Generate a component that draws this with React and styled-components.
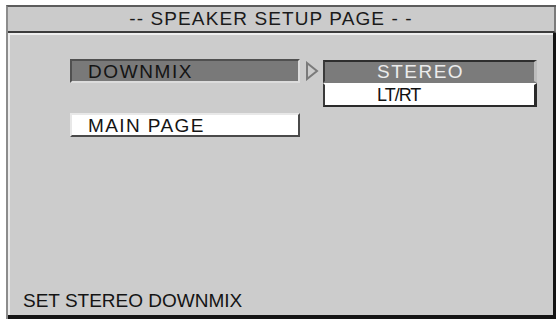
import styled, { createGlobalStyle } from "styled-components";

const GlobalStyle = createGlobalStyle`
  html, body {
    margin: 0;
    padding: 0;
    background: #ffffff;
  }
  body {
    font-family: "Liberation Sans", Arial, sans-serif;
  }
`;

/* Outer OSD frame */
const Frame = styled.div`
  display: flex;
  flex-direction: column;

  width: 548px;
  height: 312px;
  margin: 5px 0 0 6px;

  border-left: 2px solid #8c8c8c;
  border-top: 2px solid #5c5c5c;
`;

/* Title bar */
const TitleBar = styled.div`
  display: flex;
  align-items: center;
  justify-content: center;

  height: 24px;
  padding-right: 20px;
  background: #cbcbcb;
  border-right: 2px solid #7a7a7a;
  border-bottom: 2px solid #3c3c3c;

  font-size: 19px;
  letter-spacing: 1.1px;
  color: #1a1a1a;
`;

/* Page body */
const Body = styled.div`
  flex: 1;
  display: flex;
  flex-direction: column;

  background: #cccccc;
  box-shadow: inset 2px 2px 0 #eeeeee;
  border-right: 3px solid #141414;
  border-bottom: 4px solid #141414;

  padding: 26px 0 3px 62px;
`;

const MenuArea = styled.div`
  display: flex;
  align-items: flex-start;
`;

const MainColumn = styled.div`
  display: flex;
  flex-direction: column;
  gap: 30px;
  width: 230px;
`;

const MenuItem = styled.div`
  display: flex;
  align-items: center;
  box-sizing: border-box;

  height: 24px;
  padding: 2px 0 0 16px;

  font-size: 19px;
  letter-spacing: ${(p) => p.$spacing || 1.5}px;
  color: #141414;

  background: ${(p) => (p.$active ? "#797979" : "#ffffff")};
  border-top: 2px solid ${(p) => (p.$active ? "#505050" : "#e8e8e8")};
  border-left: 2px solid ${(p) => (p.$active ? "#505050" : "#e8e8e8")};
  border-bottom: 2px solid ${(p) => (p.$active ? "#dcdcdc" : "#4a4a4a")};
  border-right: 2px solid ${(p) => (p.$active ? "#dcdcdc" : "#4a4a4a")};
`;

const ArrowCell = styled.div`
  display: flex;
  align-items: center;
  justify-content: center;
  width: 23px;
  height: 24px;
`;

const SubMenu = styled.div`
  display: flex;
  flex-direction: column;
  width: 214px;
  margin-top: 1px;
`;

const SubItem = styled.div`
  display: flex;
  align-items: center;
  box-sizing: border-box;

  height: ${(p) => (p.$active ? 23 : 24)}px;
  padding-left: 52px;

  font-size: ${(p) => (p.$active ? 19 : 18)}px;
  letter-spacing: ${(p) => (p.$active ? 1.5 : -1)}px;
  color: ${(p) => (p.$active ? "#ececec" : "#111111")};

  background: ${(p) => (p.$active ? "#7b7b7b" : "#ffffff")};
  border-top: 2px solid ${(p) => (p.$active ? "#2e2e2e" : "#ffffff")};
  border-left: 2px solid #3a3a3a;
  border-right: 3px solid ${(p) => (p.$active ? "#bcbcbc" : "#2a2a2a")};
  border-bottom: 2px solid ${(p) => (p.$active ? "#7b7b7b" : "#2a2a2a")};
`;

const Status = styled.div`
  margin-top: auto;
  margin-left: -47px;

  font-size: 19px;
  letter-spacing: 0;
  color: #141414;
`;

function Arrow() {
  return (
    <svg width="16" height="20" viewBox="0 0 16 20">
      <path d="M3 2 L13 10 L3 18 Z" fill="none" stroke="#7a7a7a" strokeWidth="2" />
    </svg>
  );
}

export default function App() {
  return (
    <>
      <GlobalStyle />
      <Frame>
        <TitleBar>-- SPEAKER SETUP PAGE - -</TitleBar>
        <Body>
          <MenuArea>
            <MainColumn>
              <MenuItem $active $spacing={1.6}>DOWNMIX</MenuItem>
              <MenuItem $spacing={1.4}>MAIN PAGE</MenuItem>
            </MainColumn>
            <ArrowCell>
              <Arrow />
            </ArrowCell>
            <SubMenu>
              <SubItem $active>STEREO</SubItem>
              <SubItem>LT/RT</SubItem>
            </SubMenu>
          </MenuArea>
          <Status>SET STEREO DOWNMIX</Status>
        </Body>
      </Frame>
    </>
  );
}
